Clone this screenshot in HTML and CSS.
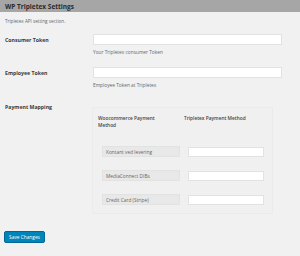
FILE: index.html
```html
<!DOCTYPE html>
<html lang="en">
<head>
    <meta charset="UTF-8">
    <title>WP Tripletex Settings</title>
    <link rel="stylesheet" href="styles.css">
</head>
<body>
    <div class="settings-header">
        <h1>WP Tripletex Settings</h1>
    </div>

    <div class="settings-body">
        <p class="section-desc">Tripletex API setting section.</p>

        <!-- Token fields -->
        <div class="field-row">
            <div class="field-label">Consumer Token</div>
            <div class="field-input">
                <input type="text" class="text-input wide">
                <p class="description">Your Tripletex consumer Token</p>
            </div>
        </div>

        <div class="field-row">
            <div class="field-label">Employee Token</div>
            <div class="field-input">
                <input type="text" class="text-input wide">
                <p class="description">Employee Token at Tripletex</p>
            </div>
        </div>

        <!-- Payment mapping table -->
        <div class="field-row mapping-row">
            <div class="field-label">Payment Mapping</div>
            <div class="mapping-box">
                <div class="mapping-head">
                    <div class="col-woo">Woocommerce Payment Method</div>
                    <div class="col-tripletex">Tripletex Payment Method</div>
                </div>
                <div class="mapping-line">
                    <div class="method-name">Kontant ved levering</div>
                    <input type="text" class="text-input small">
                </div>
                <div class="mapping-line">
                    <div class="method-name">MediaConnect DIBs</div>
                    <input type="text" class="text-input small">
                </div>
                <div class="mapping-line">
                    <div class="method-name">Credit Card (Stripe)</div>
                    <input type="text" class="text-input small">
                </div>
            </div>
        </div>

        <button class="save-btn">Save Changes</button>
    </div>
</body>
</html>
```

FILE: styles.css
```css
* {
    margin: 0;
    padding: 0;
    box-sizing: border-box;
}

body {
    background-color: #f1f1f1;
    font-family: 'Open Sans', sans-serif;
    color: #23282d;
    width: 300px;
    height: 256px;
    overflow: hidden;
}

/* Top title bar */
.settings-header {
    background-color: #a6a6a6;
    height: 12px;
    padding-left: 5px;
    display: flex;
    align-items: center;
}

.settings-header h1 {
    font-size: 6.5px;
    font-weight: bold;
    color: #2b2b2b;
}

.settings-body {
    padding: 0 5px;
}

.section-desc {
    font-size: 4.6px;
    color: #666;
    margin-top: 7px;
    height: 5px;
    line-height: 5px;
}

/* Label + input rows */
.field-row {
    display: flex;
    margin-top: 10px;
}

.field-row + .field-row {
    margin-top: 12px;
}

.field-row.mapping-row {
    margin-top: 16px;
}

.field-label {
    width: 88px;
    font-size: 5.2px;
    font-weight: bold;
    color: #3a3a3a;
    padding-top: 3px;
    line-height: 6px;
}

.field-input {
    flex: 1;
}

.text-input {
    display: block;
    background-color: #fff;
    border: 1px solid #e2e2e2;
    height: 11px;
    outline: none;
}

.text-input.wide {
    width: 189px;
}

.description {
    font-size: 4.8px;
    color: #666;
    margin-top: 4px;
    line-height: 6px;
}

/* Payment mapping */
.mapping-row .field-label {
    padding-top: 0;
}

.mapping-box {
    width: 181px;
    height: 107px;
    margin-top: 3px;
    margin-left: -1px;
    border: 1px solid #ebebeb;
    background-color: #f0f0f0;
    padding: 7px 0 0 5px;
}

.mapping-head {
    display: flex;
    font-size: 4.8px;
    font-weight: 600;
    color: #444;
    line-height: 7px;
    margin-bottom: 17px;
}

.col-woo {
    width: 86px;
    padding-right: 20px;
}

.mapping-line {
    display: flex;
    align-items: center;
    margin-left: 4px;
    margin-bottom: 13px;
}

.method-name {
    width: 78px;
    height: 11px;
    background-color: #e8e8e8;
    border: 1px solid #e2e2e2;
    font-size: 4.8px;
    color: #666;
    padding-left: 3px;
    display: flex;
    align-items: center;
    margin-right: 8px;
}

.text-input.small {
    width: 76px;
    height: 10px;
}

/* Submit */
.save-btn {
    display: block;
    background-color: #0085ba;
    color: #fff;
    border: 1px solid #006799;
    border-radius: 2px;
    font-family: 'Open Sans', sans-serif;
    font-size: 4.8px;
    width: 41px;
    height: 12px;
    margin-top: 17px;
    margin-left: -1px;
    cursor: pointer;
}
```
